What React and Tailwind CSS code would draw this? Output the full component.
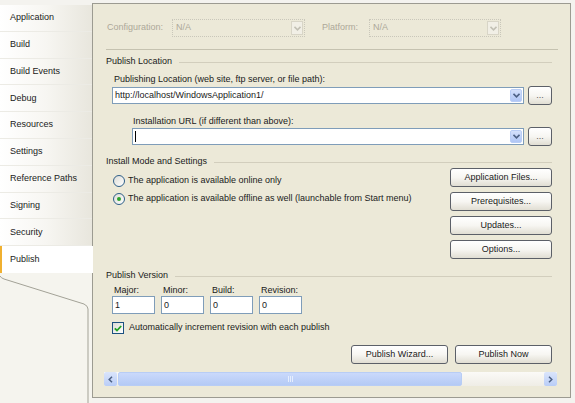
import React from 'react';

const tabs = [
  'Application',
  'Build',
  'Build Events',
  'Debug',
  'Resources',
  'Settings',
  'Reference Paths',
  'Signing',
  'Security',
  'Publish',
];

const Chevron = ({ color = '#4d6185' }) => (
  <svg width="7" height="5" viewBox="0 0 7 5">
    <path d="M0.5 0.8 L3.5 3.8 L6.5 0.8" fill="none" stroke={color} strokeWidth="1.6" />
  </svg>
);

const DisabledCombo = ({ className }) => (
  <div className={`flex h-[18px] items-center border border-dotted border-[#c9c7ba] bg-[#ece9d8] ${className}`}>
    <span className="flex-1 pl-[3px] text-[#aca899]">N/A</span>
    <span className="mr-[1px] flex h-[14px] w-[12px] items-center justify-center border border-[#d8d5c7] bg-[#f1efe6]">
      <Chevron color="#c2c0b4" />
    </span>
  </div>
);

const Combo = ({ value, cursor }) => (
  <div className="flex h-[17px] flex-1 items-center border border-[#7f9db9] bg-white">
    <span className="flex-1 truncate pl-[2px] text-[#1a1a1a]">
      {value}
      {cursor && <span className="inline-block h-[11px] w-px translate-y-[2px] bg-black" />}
    </span>
    <span className="mr-px flex h-[13px] w-[12px] items-center justify-center rounded-[2px] border border-[#b9cdf6] bg-gradient-to-b from-[#d4e0fb] to-[#b0c6f5]">
      <Chevron />
    </span>
  </div>
);

const XpButton = ({ children, className = '' }) => (
  <div
    className={`flex h-[19px] items-center justify-center rounded-[3px] border border-[#5c6068] bg-gradient-to-b from-white via-[#f7f6f2] to-[#e1ded3] text-[#1a1a1a] ${className}`}
  >
    {children}
  </div>
);

const GroupHeader = ({ children }) => (
  <div className="flex h-[12px] items-center gap-[7px]">
    <span className="text-[#1a1a1a]">{children}</span>
    <span className="h-px flex-1 bg-[#d2cebd]" />
  </div>
);

const Radio = ({ checked, label }) => (
  <div className="flex h-[13px] items-center gap-[3px]">
    <span className="flex h-[12px] w-[12px] items-center justify-center rounded-full border border-[#2e5f88] bg-gradient-to-br from-[#dcdcd6] to-white">
      {checked && <span className="h-[4px] w-[4px] rounded-full bg-[#2ca32c]" />}
    </span>
    <span className="text-[#1a1a1a]">{label}</span>
  </div>
);

const VersionField = ({ label, value }) => (
  <div className="flex w-[43px] flex-col">
    <span className="h-[12px] pl-[2px] leading-[12px] text-[#1a1a1a]">{label}</span>
    <div className="h-[18px] border border-[#7f9db9] bg-white pl-[2px] leading-[16px] text-[#1a1a1a]">{value}</div>
  </div>
);

export default function App() {
  return (
    <div
      className="flex h-[403px] w-[575px] overflow-hidden bg-[#f4f3ef] text-[9px]"
      style={{ fontFamily: '"Liberation Sans", Arial, sans-serif' }}
    >
      {/* Tab strip */}
      <div className="relative z-10 flex w-[92px] shrink-0 flex-col pt-[5px]">
        {tabs.map((t) => {
          const active = t === 'Publish';
          return active ? (
            <div
              key={t}
              className="-mr-px flex h-[27px] shrink-0 items-center border-l-[2px] border-[#f0b030] bg-white pl-[8px] text-[#1a1a1a]"
            >
              {t}
            </div>
          ) : (
            <div
              key={t}
              className="flex h-[26.8px] shrink-0 items-center border-b border-[#ecebe5] bg-gradient-to-r from-white via-[#f7f6f2] to-[#e8e6dd] pl-[10px] text-[#1a1a1a]"
            >
              {t}
            </div>
          );
        })}
        <div className="min-h-0 flex-1 overflow-hidden">
          <svg width="92" height="135" viewBox="0 0 92 135" className="block">
            <path d="M0 0 L92 0 L92 135 L0 135 Z" fill="#f5f4ee" />
            <path d="M0 3 Q1 5 4 6 L84 31 Q88 33 88 36 L88 135" fill="none" stroke="#a3a297" strokeWidth="1" />
          </svg>
        </div>
      </div>

      {/* Property page */}
      <div className="flex flex-1 flex-col pt-[3px] pr-[4px] pb-[5px]">
        <div className="flex flex-1 flex-col border border-[#9c9b91] bg-[#ece9d8] pl-[13px] pr-[18px]">
          {/* Configuration row */}
          <div className="mt-[15px] flex items-center text-[#aca899]">
            <span className="w-[66px] pl-[1px]">Configuration:</span>
            <DisabledCombo className="w-[133px]" />
            <span className="ml-[17px] w-[47px]">Platform:</span>
            <DisabledCombo className="w-[132px]" />
          </div>
          <div className="-mr-[6px] mt-[12px] h-px bg-[#c5c2b0]" />

          {/* Publish Location */}
          <div className="mt-[6px]">
            <GroupHeader>Publish Location</GroupHeader>
          </div>
          <div className="mt-[5px] ml-[8px] h-[12px] leading-[12px] text-[#1a1a1a]">
            Publishing Location (web site, ftp server, or file path):
          </div>
          <div className="ml-[6px] mt-[1px] flex items-center gap-[4px]">
            <Combo value="http://localhost/WindowsApplication1/" />
            <XpButton className="w-[24px] text-[#5a5a5a]">...</XpButton>
          </div>
          <div className="mt-[10px] ml-[27px] h-[12px] leading-[12px] text-[#1a1a1a]">
            Installation URL (if different than above):
          </div>
          <div className="ml-[26px] mt-0 flex items-center gap-[4px]">
            <Combo value="" cursor />
            <XpButton className="w-[24px] text-[#5a5a5a]">...</XpButton>
          </div>

          {/* Install Mode and Settings */}
          <div className="mt-[10px]">
            <GroupHeader>Install Mode and Settings</GroupHeader>
          </div>
          <div className="flex">
            <div className="ml-[7px] flex flex-1 flex-col gap-[5px] pt-[6px]">
              <Radio label="The application is available online only" />
              <Radio checked label="The application is available offline as well (launchable from Start menu)" />
            </div>
            <div className="flex w-[102px] flex-col gap-[5px]">
              <XpButton>Application Files...</XpButton>
              <XpButton>Prerequisites...</XpButton>
              <XpButton>Updates...</XpButton>
              <XpButton>Options...</XpButton>
            </div>
          </div>

          {/* Publish Version */}
          <div className="mt-[11px]">
            <GroupHeader>Publish Version</GroupHeader>
          </div>
          <div className="ml-[6px] mt-[2px] flex gap-[6px]">
            <VersionField label="Major:" value="1" />
            <VersionField label="Minor:" value="0" />
            <VersionField label="Build:" value="0" />
            <VersionField label="Revision:" value="0" />
          </div>
          <div className="ml-[6px] mt-[8px] flex h-[12px] items-center gap-[5px]">
            <span className="flex h-[12px] w-[12px] items-center justify-center border border-[#1c5180] bg-gradient-to-br from-[#dcdcd6] to-white">
              <svg width="8" height="7" viewBox="0 0 8 7">
                <path d="M0.8 3.3 L3 5.5 L7.2 1" fill="none" stroke="#21a121" strokeWidth="1.8" />
              </svg>
            </span>
            <span className="text-[#1a1a1a]">Automatically increment revision with each publish</span>
          </div>

          <div className="mt-[11px] flex justify-end gap-[7px]">
            <XpButton className="w-[97px]">Publish Wizard...</XpButton>
            <XpButton className="w-[97px]">Publish Now</XpButton>
          </div>

          {/* Horizontal scrollbar */}
          <div className="-ml-[2px] -mr-[5px] mt-[8px] flex h-[14px] bg-gradient-to-b from-[#fbfaf7] to-[#efede6]">
            <span className="flex w-[13px] items-center justify-center rounded-[2px] bg-gradient-to-b from-[#dbe5fb] to-[#b9cdf7]">
              <svg width="5" height="7" viewBox="0 0 5 7">
                <path d="M4 0.8 L1.2 3.5 L4 6.2" fill="none" stroke="#4d6185" strokeWidth="1.5" />
              </svg>
            </span>
            <span className="ml-px flex w-[344px] items-center justify-center rounded-[2px] border border-[#b8cdf5] bg-gradient-to-b from-[#cad9fb] to-[#b4caf5]">
              <span className="flex gap-px">
                <span className="h-[6px] w-px bg-[#e6eefd]" />
                <span className="h-[6px] w-px bg-[#e6eefd]" />
                <span className="h-[6px] w-px bg-[#e6eefd]" />
              </span>
            </span>
            <span className="flex-1" />
            <span className="flex w-[13px] items-center justify-center rounded-[2px] bg-gradient-to-b from-[#dbe5fb] to-[#b9cdf7]">
              <svg width="5" height="7" viewBox="0 0 5 7">
                <path d="M1 0.8 L3.8 3.5 L1 6.2" fill="none" stroke="#4d6185" strokeWidth="1.5" />
              </svg>
            </span>
          </div>
        </div>
      </div>
    </div>
  );
}
